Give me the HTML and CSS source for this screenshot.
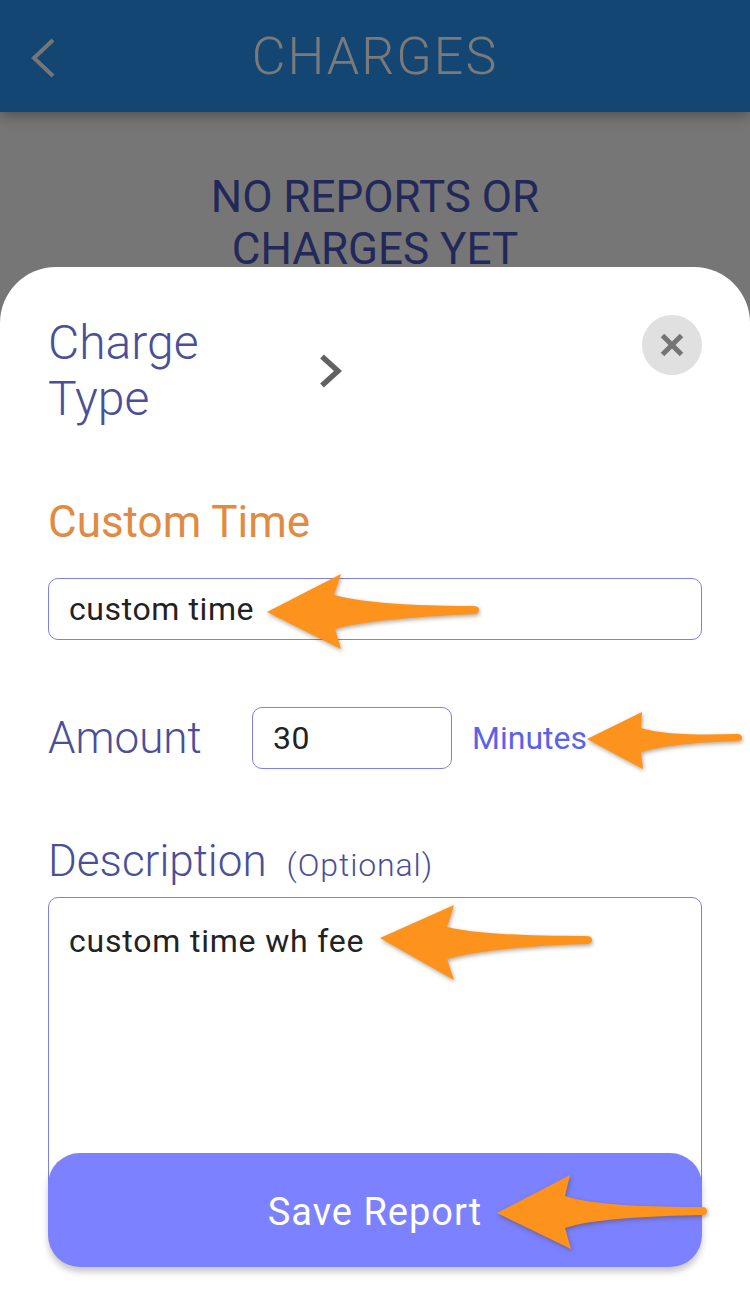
FILE: index.html
```html
<!DOCTYPE html>
<html lang="en">
<head>
    <meta charset="UTF-8">
    <meta name="viewport" content="width=device-width, initial-scale=1.0">
    <title>Charges</title>
    <link rel="stylesheet" href="styles.css">
</head>
<body>

    <header>
        <svg class="back" width="26" height="40" viewBox="0 0 26 40">
            <path d="M23 2 L4 20 L23 38" fill="none" stroke="#767676" stroke-width="4"/>
        </svg>
        <div class="title">CHARGES</div>
    </header>

    <main>
        <p class="empty">NO REPORTS OR<br>CHARGES YET</p>
    </main>

    <!-- Bottom sheet -->
    <section class="sheet">
        <div class="type-row">
            <div class="type-label">Charge<br>Type</div>
            <svg class="chevron" width="24" height="34" viewBox="0 0 24 34">
                <path d="M4 2.500 L20 17 L4 31.500" fill="none" stroke="#616161" stroke-width="5.500"/>
            </svg>
            <div class="close">
                <svg width="24" height="24" viewBox="0 0 24 24">
                    <path d="M2.500 2.500 L21.500 21.500 M21.500 2.500 L2.500 21.500" fill="none" stroke="#757575" stroke-width="5"/>
                </svg>
            </div>
        </div>

        <h3 class="type-name">Custom Time</h3>
        <div class="field name">custom time</div>

        <div class="amount-row">
            <span class="label">Amount</span>
            <div class="field amount">30</div>
            <span class="unit">Minutes</span>
        </div>

        <div class="desc-label">
            <span class="label">Description</span>
            <span class="optional">(Optional)</span>
        </div>
        <div class="field desc">custom time wh fee</div>

        <button class="save">Save Report</button>
    </section>

    <!-- Orange annotation arrows -->
    <svg class="arrows" width="750" height="1294" viewBox="0 0 750 1294">
        <path d="M267 612 L341 574 L334 595 C365 604 430 606 473 606 Q479 606 479 610 Q479 614 473 614 C430 616 365 620 335 629 L341 649 Z"/>
        <path d="M587 739 L642 712 L641 728 C665 735 700 735 737 734 Q742 734 742 738 Q742 741 737 741 C700 742 665 745 641 752 L643 769 Z"/>
        <path d="M380 938 L454 905 L447 927 C480 935 540 936 586 936 Q592 936 592 940 Q592 944 586 944 C540 945 480 950 447 959 L454 980 Z"/>
        <path d="M497 1213 L570 1175 L565 1196 C590 1205 650 1207 702 1207 Q707 1207 707 1211 Q707 1215 702 1215 C650 1216 590 1219 565 1228 L571 1249 Z"/>
    </svg>

</body>
</html>
```

FILE: styles.css
```css
* {
    margin: 0;
    padding: 0;
    box-sizing: border-box;
}

html, body {
    height: 100%;
    overflow: hidden;
}

body {
    position: relative;
    font-family: Roboto, "Liberation Sans", sans-serif;
    background-color: #767676;
}

header {
    position: relative;
    height: 112px;
    background: #134672;
    display: flex;
    justify-content: center;
    align-items: center;
    box-shadow: 0 4px 12px rgba(0, 0, 0, 0.3);
}

header .back {
    position: absolute;
    left: 30px;
    top: 38px;
}

header .title {
    font-size: 52px;
    font-weight: 300;
    letter-spacing: 2px;
    color: #7a7a7a;
}

main {
    padding-top: 59px;
}

.empty {
    text-align: center;
    font-size: 44px;
    line-height: 52px;
    color: #23285a;
}

.sheet {
    position: absolute;
    left: 0;
    right: 0;
    top: 267px;
    bottom: 0;
    padding: 48px 48px 0;
    background: white;
    border-radius: 56px 56px 0 0;
    overflow: hidden;
}

.type-row {
    position: relative;
    height: 112px;
    display: flex;
    align-items: center;
}

.type-label {
    width: 270px;
    font-size: 48px;
    font-weight: 300;
    line-height: 56px;
    color: #4a4f99;
}

.close {
    position: absolute;
    right: 0;
    top: 0;
    width: 60px;
    height: 60px;
    border-radius: 50%;
    background: #e0e0e0;
    display: flex;
    justify-content: center;
    align-items: center;
}

.type-name {
    margin-top: 69px;
    font-size: 44px;
    font-weight: 400;
    line-height: 52px;
    color: #e08a43;
}

.field {
    height: 62px;
    padding-left: 20px;
    display: flex;
    align-items: center;
    font-size: 32px;
    letter-spacing: 0.6px;
    color: #222;
    background: white;
    border: 1px solid #7b81e8;
    border-radius: 10px;
}

.field.name {
    margin-top: 30px;
}

.amount-row {
    margin-top: 67px;
    display: flex;
    align-items: center;
}

.label {
    font-size: 44px;
    font-weight: 300;
    color: #4a4f99;
}

.amount-row .label {
    width: 204px;
}

.field.amount {
    width: 200px;
}

.unit {
    margin-left: 20px;
    font-size: 32px;
    color: #5a62ea;
}

.desc-label {
    margin-top: 66px;
    display: flex;
    align-items: baseline;
    gap: 20px;
}

.optional {
    font-size: 32px;
    font-weight: 300;
    letter-spacing: 0.9px;
    color: #4a4f99;
}

.field.desc {
    height: 330px;
    margin-top: 10px;
    padding-top: 24px;
    align-items: flex-start;
    letter-spacing: 0.8px;
}

.save {
    position: absolute;
    left: 48px;
    right: 48px;
    top: 886px;
    height: 114px;
    padding-top: 4px;
    border: none;
    border-radius: 32px;
    background-color: #7b81ff;
    box-shadow: 0 5px 6px rgba(0, 0, 0, 0.22);
    font-family: inherit;
    font-size: 38px;
    letter-spacing: 1px;
    color: white;
}

.arrows {
    position: absolute;
    left: 0;
    top: 0;
    fill: #fd931d;
    filter: drop-shadow(1px 2px 2px rgba(90, 60, 20, 0.45));
}
```
